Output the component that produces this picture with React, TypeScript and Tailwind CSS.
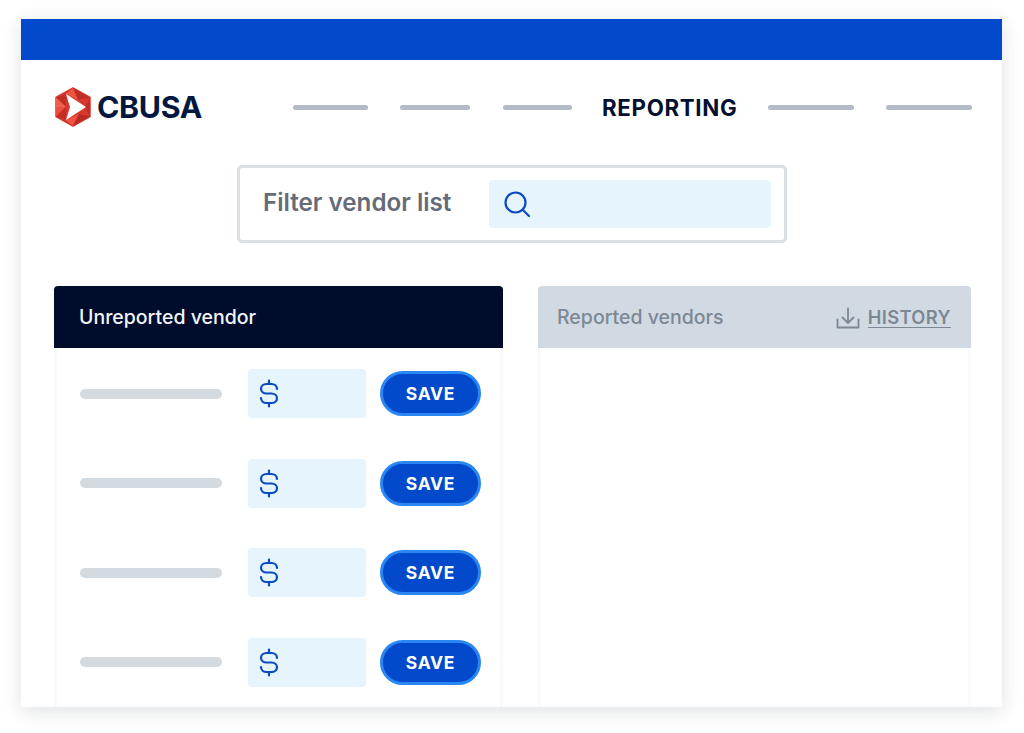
const Logo = () => (
  <svg width="36" height="40" viewBox="0 0 36 40" className="ml-[1px] shrink-0">
    <polygon points="18,1 35,10.5 35,29.5 18,39 1,29.5 1,10.5" fill="#d8392e" stroke="#d8392e" strokeWidth="1.5" strokeLinejoin="round" />
    <polygon points="18,1 35,10.5 23,13" fill="#c22e26" />
    <polygon points="18,1 11,7 23,13" fill="#ee5443" />
    <polygon points="1,10.5 11,7 11,20" fill="#c22e26" />
    <polygon points="1,10.5 1,20 11,20" fill="#f2604d" />
    <polygon points="1,20 1,29.5 11,20" fill="#ec4e3e" />
    <polygon points="1,29.5 11,20 11,33" fill="#c22e26" />
    <polygon points="18,39 11,33 24,27" fill="#ee5443" />
    <polygon points="18,39 35,29.5 24,27" fill="#b92a23" />
    <polygon points="35,10.5 35,29.5 30,20" fill="#c22e26" />
    <polygon points="11,7 31,20 11,33 15,20" fill="#ffffff" />
  </svg>
);

const Bar = ({ className }: { className: string }) => (
  <div className={`h-[5px] rounded-full bg-[#b4bac6] ${className}`} />
);

const DollarIcon = () => (
  <svg width="20" height="29" viewBox="0 0 20 29" fill="none" stroke="#0a4bc0" strokeWidth="2.2" strokeLinecap="round">
    <path d="M18 10C18 7 15.5 5 12.5 5H7.5C4.5 5 2 7 2 9.75C2 12.5 4.5 14.5 7.5 14.5H12.5C15.5 14.5 18 16.5 18 19.25C18 22 15.5 24 12.5 24H7.5C4.5 24 2 22 2 19" />
    <path d="M10 1.5V5M10 24V27.5" />
  </svg>
);

const SearchIcon = () => (
  <svg width="26" height="26" viewBox="0 0 26 26" fill="none" stroke="#0a4bc0" strokeWidth="2.2" strokeLinecap="round">
    <circle cx="11.5" cy="11.5" r="10" />
    <path d="M19 19L25 25" />
  </svg>
);

const DownloadIcon = () => (
  <svg width="24" height="22" viewBox="0 0 24 22" fill="none" stroke="#7c8894" strokeWidth="1.8" strokeLinecap="round" strokeLinejoin="round">
    <path d="M1.5 12.5V20.5H22.5V12.5" />
    <path d="M12 1.5V16M6.5 10.5L12 16L17.5 10.5" />
  </svg>
);

const VendorRow = () => (
  <div className="flex h-[49px] items-center">
    <div className="ml-[23px] h-[10px] w-[142px] rounded-full bg-[#d3dbe0]" />
    <div className="ml-[26px] flex h-[49px] w-[118px] items-center rounded bg-[#e5f4fd] pl-[11px]">
      <DollarIcon />
    </div>
    <button className="ml-[14px] flex h-[45px] w-[101px] items-center justify-center rounded-full border-[3px] border-[#2a86f2] bg-[#0249cb] pt-[2px] text-[17.5px] font-bold tracking-[0.04em] text-white">
      SAVE
    </button>
  </div>
);

export default function App() {
  return (
    <div className="h-[733px] w-[1024px] overflow-hidden bg-white pl-[21px] pt-[19px] font-['Inter',sans-serif]">
      <div className="flex h-[688px] w-[981px] flex-col overflow-hidden bg-white shadow-[0_4px_18px_rgba(30,40,60,0.14)]">
        <div className="h-[41px] shrink-0 bg-[#0249cb]" />

        {/* Nav */}
        <div className="mt-[27px] flex h-[40px] items-center pl-[33px]">
          <Logo />
          <span className="ml-[6px] w-[196px] pt-[2px] text-[30.3px] font-bold tracking-[-0.01em] text-[#04183f]">CBUSA</span>
          <Bar className="w-[75px]" />
          <Bar className="ml-[32px] w-[70px]" />
          <Bar className="ml-[33px] w-[69px]" />
          <span className="ml-[30px] w-[135px] whitespace-nowrap pt-[1px] text-[22.3px] font-bold tracking-[0.03em] text-[#04102f]">REPORTING</span>
          <Bar className="ml-[31px] w-[86px]" />
          <Bar className="ml-[32px] w-[86px]" />
        </div>

        {/* Filter */}
        <div className="ml-[216px] mt-[38px] flex h-[78px] w-[550px] items-center rounded-[5px] border-[3px] border-[#d8e0e2] pl-[23px]">
          <span className="mb-[2px] w-[226px] whitespace-nowrap text-[24.2px] font-semibold text-[#666b78]">Filter vendor list</span>
          <div className="flex h-[48px] w-[282px] items-center rounded bg-[#e5f4fd] pl-[15px]">
            <SearchIcon />
          </div>
        </div>

        {/* Columns */}
        <div className="ml-[33px] mt-[43px] flex min-h-0 flex-1 gap-[35px]">
          <div className="flex w-[449px] flex-col">
            <div className="flex h-[62px] shrink-0 items-center rounded-t bg-[#000c2c] pl-[25px] pt-[2px] text-[19.5px] font-medium text-[#f2f5f9]">
              Unreported vendor
            </div>
            <div className="flex flex-1 flex-col gap-[40.5px] border-x-[3px] border-[#f8fafb] pt-[21px]">
              <VendorRow />
              <VendorRow />
              <VendorRow />
              <VendorRow />
            </div>
          </div>

          <div className="flex w-[433px] flex-col">
            <div className="flex h-[62px] shrink-0 items-center justify-between rounded-t bg-[#d1dae3] pl-[19px] pr-[20px] pt-[2px] text-[19.5px] font-medium text-[#7c8894]">
              <span>Reported vendors</span>
              <div className="flex items-center gap-[8px]">
                <DownloadIcon />
                <span className="text-[18.3px] font-semibold tracking-[0.02em] underline underline-offset-[3px]">HISTORY</span>
              </div>
            </div>
            <div className="flex-1 border-x-[3px] border-[#f8fafb]" />
          </div>
        </div>
      </div>
    </div>
  );
}
